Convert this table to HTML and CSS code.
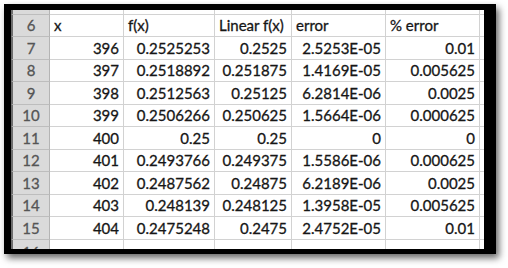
FILE: index.html
```html
<!DOCTYPE html>
<html>
<head>
<meta charset="utf-8">
<link rel="stylesheet" href="styles.css">
</head>
<body>
<div class="frame">
  <div class="sheet">
    <div class="c rh top"></div><div class="c top"></div><div class="c top"></div><div class="c top"></div><div class="c top"></div><div class="c top"></div><div class="c top last"></div>

    <div class="c rh">6</div><div class="c t">x</div><div class="c t">f(x)</div><div class="c t">Linear f(x)</div><div class="c t">error</div><div class="c t">% error</div><div class="c last"></div>
    <div class="c rh">7</div><div class="c n">396</div><div class="c n">0.2525253</div><div class="c n">0.2525</div><div class="c n">2.5253E-05</div><div class="c n">0.01</div><div class="c last"></div>
    <div class="c rh">8</div><div class="c n">397</div><div class="c n">0.2518892</div><div class="c n">0.251875</div><div class="c n">1.4169E-05</div><div class="c n">0.005625</div><div class="c last"></div>
    <div class="c rh">9</div><div class="c n">398</div><div class="c n">0.2512563</div><div class="c n">0.25125</div><div class="c n">6.2814E-06</div><div class="c n">0.0025</div><div class="c last"></div>
    <div class="c rh">10</div><div class="c n">399</div><div class="c n">0.2506266</div><div class="c n">0.250625</div><div class="c n">1.5664E-06</div><div class="c n">0.000625</div><div class="c last"></div>
    <div class="c rh">11</div><div class="c n">400</div><div class="c n">0.25</div><div class="c n">0.25</div><div class="c n">0</div><div class="c n">0</div><div class="c last"></div>
    <div class="c rh">12</div><div class="c n">401</div><div class="c n">0.2493766</div><div class="c n">0.249375</div><div class="c n">1.5586E-06</div><div class="c n">0.000625</div><div class="c last"></div>
    <div class="c rh">13</div><div class="c n">402</div><div class="c n">0.2487562</div><div class="c n">0.24875</div><div class="c n">6.2189E-06</div><div class="c n">0.0025</div><div class="c last"></div>
    <div class="c rh">14</div><div class="c n">403</div><div class="c n">0.248139</div><div class="c n">0.248125</div><div class="c n">1.3958E-05</div><div class="c n">0.005625</div><div class="c last"></div>
    <div class="c rh">15</div><div class="c n">404</div><div class="c n">0.2475248</div><div class="c n">0.2475</div><div class="c n">2.4752E-05</div><div class="c n">0.01</div><div class="c last"></div>
    <div class="c rh bot"><span class="cut">16</span></div><div class="c bot"></div><div class="c bot"></div><div class="c bot"></div><div class="c bot"></div><div class="c bot"></div><div class="c bot last"></div>
  </div>
</div>
</body>
</html>
```
FILE: styles.css
```css
html, body {
  margin: 0;
  padding: 0;
  background: #ffffff;
}
body {
  width: 508px;
  height: 268px;
  overflow: hidden;
  padding-top: 3.5px;
  padding-left: 4px;
  box-sizing: border-box;
}
.frame {
  width: 492px;
  height: 250.5px;
  box-sizing: border-box;
  border-style: solid;
  border-color: #000;
  border-width: 6px 12px 5px 7px;
  box-shadow: 3px 4px 7px rgba(0, 0, 0, 0.6);
  overflow: hidden;
  background: #fff;
}
.sheet {
  display: grid;
  grid-template-columns: 39px 74px 91px 77px 94px 94px 4px;
  grid-template-rows: 5.3px repeat(10, 22.5px) 12px;
  font-family: Lato, "Open Sans", sans-serif;
  font-size: 15px;
  color: #161616;
  -webkit-text-stroke: 0.3px currentColor;
}
.c {
  box-sizing: border-box;
  border-right: 1px solid #d2d2d2;
  border-bottom: 1px solid #d2d2d2;
  display: flex;
  align-items: center;
  white-space: nowrap;
  overflow: hidden;
  line-height: 1;
}
.c.last {
  border-right: none;
}
.rh {
  background: #dadada;
  border-left: 2px solid #6e6e6e;
  border-right: 1px solid #b4b4b4;
  border-bottom: 1px solid #bdbdbd;
  justify-content: center;
  color: #555555;
}
.t {
  justify-content: flex-start;
  padding-left: 4px;
}
.t.wide {
  letter-spacing: 0.3px;
}
.n {
  justify-content: flex-end;
  padding-right: 4px;
}
.bot {
  align-items: flex-start;
  border-bottom: none;
}
.cut {
  margin-top: 5px;
}
```
